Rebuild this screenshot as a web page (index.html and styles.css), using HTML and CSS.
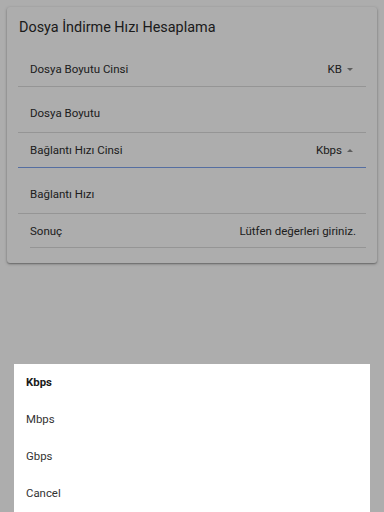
FILE: index.html
```html
<!DOCTYPE html>
<html lang="tr">
<head>
<meta charset="utf-8">
<title>Dosya İndirme Hızı Hesaplama</title>
<link rel="stylesheet" href="styles.css">
</head>
<body>
<main class="page">
  <section class="card">
    <h1 class="card-title">Dosya İndirme Hızı Hesaplama</h1>
    <ul class="list">
      <li class="item item-select">
        <span class="label">Dosya Boyutu Cinsi</span>
        <span class="value">KB <span class="caret caret-down"></span></span>
      </li>
      <li class="item item-input">
        <span class="label">Dosya Boyutu</span>
      </li>
      <li class="item item-select item-focused">
        <span class="label">Bağlantı Hızı Cinsi</span>
        <span class="value">Kbps <span class="caret caret-up"></span></span>
      </li>
      <li class="item item-input">
        <span class="label">Bağlantı Hızı</span>
      </li>
      <li class="item item-result">
        <div class="item-inner">
          <span class="label">Sonuç</span>
          <span class="value">Lütfen değerleri giriniz.</span>
        </div>
      </li>
    </ul>
  </section>
</main>
<div class="backdrop"></div>
<div class="action-sheet">
  <button class="sheet-btn sheet-selected">Kbps</button>
  <button class="sheet-btn">Mbps</button>
  <button class="sheet-btn">Gbps</button>
  <button class="sheet-btn">Cancel</button>
</div>
</body>
</html>
```
FILE: styles.css
```css
* { box-sizing: border-box; }
html, body {
  margin: 0;
  padding: 0;
  width: 384px;
  height: 512px;
  overflow: hidden;
  background: #ffffff;
  font-family: Roboto, "Liberation Sans", Arial, sans-serif;
  color: #262626;
}
.page {
  padding: 7px;
}
.card {
  background: #ffffff;
  border-radius: 3px;
  box-shadow: 0 1px 3px rgba(0,0,0,0.35), 0 1px 1px rgba(0,0,0,0.15);
  padding: 12px 11px 15px 11px;
}
.card-title {
  margin: 0 0 16px 1px;
  font-size: 14.4px;
  line-height: 17px;
  font-weight: 400;
  color: #2a2a2a;
}
.list {
  list-style: none;
  margin: 0;
  padding: 0;
}
.item {
  display: flex;
  align-items: center;
  justify-content: space-between;
  padding: 0 13px 0 12px;
  font-size: 11.5px;
  color: #2e2e2e;
  border-bottom: 1px solid #dcdcdc;
}
.item-select {
  height: 35px;
}
.item-input {
  height: 46px;
  align-items: flex-start;
  padding-top: 19px;
}
.item-focused {
  border-bottom-color: #7ea2ee;
}
.item-result {
  height: 34px;
  padding: 0 0 0 12px;
  border-bottom: none;
}
.item-inner {
  flex: 1;
  height: 100%;
  display: flex;
  align-items: center;
  justify-content: space-between;
  padding-right: 10px;
  border-bottom: 1px solid #dcdcdc;
}
.value {
  display: flex;
  align-items: center;
}
.caret {
  display: inline-block;
  width: 0;
  height: 0;
  margin-left: 5px;
  border-left: 3.5px solid transparent;
  border-right: 3.5px solid transparent;
}
.caret-down {
  border-top: 3.5px solid #8a8a8a;
}
.caret-up {
  border-bottom: 3.5px solid #8a8a8a;
}
.backdrop {
  position: fixed;
  inset: 0;
  background: rgba(0,0,0,0.32);
}
.action-sheet {
  position: fixed;
  left: 14px;
  right: 14px;
  bottom: 0;
  background: #ffffff;
  display: flex;
  flex-direction: column;
}
.sheet-btn {
  height: 37px;
  border: none;
  background: transparent;
  text-align: left;
  padding: 0 0 1px 12px;
  font-family: Roboto, "Liberation Sans", Arial, sans-serif;
  font-size: 11.4px;
  color: #333333;
}
.sheet-selected {
  font-weight: 700;
  color: #1a1a1a;
}
```
